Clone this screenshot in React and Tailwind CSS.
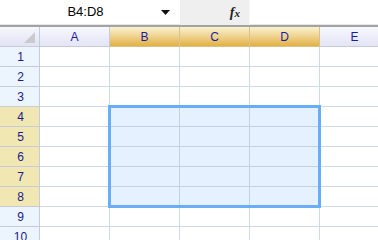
import React from "react";

const cols = ["A", "B", "C", "D", "E"];
const rows = [1, 2, 3, 4, 5, 6, 7, 8, 9, 10];

function isSel(r, c) {
  return r >= 4 && r <= 8 && c >= 1 && c <= 3;
}

export default function App() {
  return (
    <div
      className="relative w-[378px] h-[240px] overflow-hidden bg-white text-[12px]"
      style={{ fontFamily: '"Liberation Sans", Arial, sans-serif' }}
    >
      {/* formula bar */}
      <div className="flex h-[27px] border-b-2 border-[#a3a3a3]">
        <div className="flex w-[180px] items-center border-b border-[#e6e6e6] bg-white">
          <span className="flex-1 pl-[10px] text-center text-[13px] text-black">B4:D8</span>
          <svg width="9" height="5" viewBox="0 0 9 5" className="mr-[10px]">
            <path d="M0 0h9L4.5 5z" fill="#111" />
          </svg>
        </div>
        <div className="flex w-[70px] items-center justify-end border-r border-[#f8f8f8] bg-[#efefef] pr-[9px]">
          <span
            className="text-[14px] font-bold italic text-[#222]"
            style={{ fontFamily: '"Liberation Serif", serif' }}
          >
            f<span className="text-[11px]">x</span>
          </span>
        </div>
        <div className="flex-1 border-b border-[#e6e6e6] bg-white" />
      </div>

      {/* header row */}
      <div className="flex h-[20px]">
        <div className="relative w-[40px] shrink-0 border-r border-b border-[#c5cbd9] bg-gradient-to-b from-[#f6f6fd] to-[#e2e3f4]">
          <svg width="11" height="11" viewBox="0 0 11 11" className="absolute right-[4px] bottom-[3px]">
            <path d="M11 0V11H0z" fill="#c9c9cf" />
          </svg>
        </div>
        {cols.map((c, i) => (
          <div
            key={c}
            className={
              "flex w-[70px] shrink-0 items-center justify-center border-r border-b text-[#1b1ba6] " +
              (i >= 1 && i <= 3
                ? "border-[#d6c28a] bg-gradient-to-b from-[#faf2cf] to-[#e2b13d]"
                : "border-[#c5cbd9] bg-gradient-to-b from-[#f7f7fd] to-[#e3e5f6]")
            }
          >
            {c}
          </div>
        ))}
      </div>

      {/* rows */}
      {rows.map((r) => (
        <div key={r} className="flex h-[20px]">
          <div
            className={
              "flex w-[40px] shrink-0 items-center justify-center border-r border-b border-[#c5cbd9] pl-[2px] text-[#1b1b8e] " +
              (r >= 4 && r <= 8 ? "bg-[#f0e7b3]" : "bg-[#ecf4fd]")
            }
          >
            {r}
          </div>
          {cols.map((c, i) => (
            <div
              key={c}
              className={
                "w-[70px] shrink-0 border-r border-b " +
                (isSel(r, i) ? "border-[#c3d1e6] bg-[#e5f1fe]" : "border-[#d0d7e5] bg-white")
              }
            />
          ))}
        </div>
      ))}

      {/* selection outline */}
      <div className="absolute left-[108px] top-[105px] h-[103px] w-[213px] border-[3px] border-[#68adf7]" />
    </div>
  );
}
